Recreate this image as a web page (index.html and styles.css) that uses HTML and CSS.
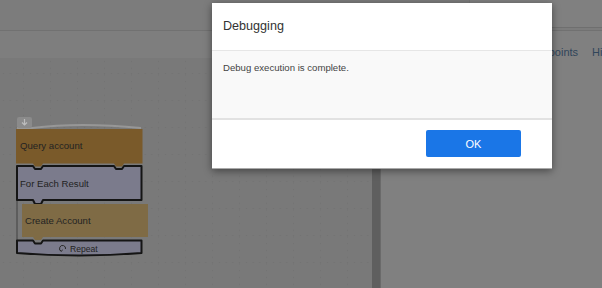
FILE: index.html
```html
<!DOCTYPE html>
<html>
<head>
<meta charset="utf-8">
<link rel="stylesheet" href="styles.css">
</head>
<body>
<div class="app">
  <header class="topbar">
    <div class="topbar-fill"></div>
    <div class="topbar-box"></div>
  </header>
  <div class="main">
    <section class="editor">
      <div class="toolbar"></div>
      <div class="canvas">
        <svg class="blocks" width="372" height="230" viewBox="0 58 372 230" xmlns="http://www.w3.org/2000/svg">
          <!-- hat -->
          <path d="M17 128 L32 128 Q 80 122 141 128" fill="none" stroke="#979797" stroke-width="2"/>
          <rect x="17" y="117" width="15" height="11" rx="2" fill="#8b8b8b"/>
          <path d="M24.5 119 V125 M22 122.5 L24.5 125 L27 122.5" fill="none" stroke="#bdbdbd" stroke-width="1.2"/>
          <!-- query account -->
          <path d="M16 129 H142.5 V163.5 H124 l-2 3 h-6 l-2 -3 H43 l-2 3 h-6 l-2 -3 H16 Z" fill="#7a5a2a"/>
          <text x="20" y="149" class="btext">Query account</text>
          <!-- rail -->
          <path d="M17 200 V241" stroke="#555" stroke-width="1.5"/>
          <!-- for each -->
          <path d="M17 166 H33 l2 3 h6 l2 -3 H114 l2 3 h6 l2 -3 H141.5 V200 H43 l-2 4 h-6 l-2 -4 H17 Z" fill="#7b7b8c" stroke="#151515" stroke-width="2" stroke-linejoin="round"/>
          <text x="20" y="187" class="btext">For Each Result</text>
          <!-- create account -->
          <path d="M22 204 H148 V237 H43 l-2 3 h-6 l-2 -3 H22 Z" fill="#7f6b45"/>
          <text x="25" y="224" class="btext">Create Account</text>
          <!-- repeat -->
          <path d="M17 240.5 H33 l2 3 h6 l2 -3 H141.5 V253 Q 79 258 17 253 Z" fill="#7b7b8c" stroke="#151515" stroke-width="2" stroke-linejoin="round"/>
          <path d="M61 251 A3 3 0 1 1 65.5 249" fill="none" stroke="#2a2a2a" stroke-width="1"/>
          <path d="M59.5 249.5 L61 251.5 L62.8 249.8" fill="none" stroke="#2a2a2a" stroke-width="1"/>
          <text x="70" y="251.5" class="rtext">Repeat</text>
        </svg>
      </div>
    </section>
    <div class="splitter"></div>
    <section class="panel">
      <nav class="tabs">
        <span class="tab">Breakpoints</span>
        <span class="tab">History</span>
      </nav>
    </section>
  </div>
</div>

<div class="dialog" role="dialog">
  <div class="dialog-head">Debugging</div>
  <div class="dialog-body">Debug execution is complete.</div>
  <div class="dialog-foot">
    <button class="ok">OK</button>
  </div>
</div>
</body>
</html>
```

FILE: styles.css
```css
html, body {
  margin: 0;
  padding: 0;
}
body {
  width: 602px;
  height: 288px;
  overflow: hidden;
  background: #808080;
  font-family: "Liberation Sans", Arial, sans-serif;
  position: relative;
}
.app {
  display: flex;
  flex-direction: column;
  height: 288px;
}
.topbar {
  height: 30px;
  flex: none;
  display: flex;
  background: #7c7c7c;
  border-bottom: 1px solid #717171;
}
.topbar-fill {
  flex: 1;
}
.topbar-box {
  width: 132px;
  height: 27px;
  background: #808080;
  border-left: 1px solid #767676;
  border-bottom: 1px solid #6f6f6f;
}
.main {
  flex: 1;
  display: flex;
  min-height: 0;
}
.editor {
  flex: none;
  width: 372px;
  display: flex;
  flex-direction: column;
}
.toolbar {
  height: 27px;
  background: #7e7e7e;
}
.canvas {
  flex: 1;
  position: relative;
  background-color: #797979;
  background-image:
    radial-gradient(circle, #727272 0.6px, transparent 1px),
    radial-gradient(circle, #727272 0.6px, transparent 1px);
  background-size: 6.75px 27px, 27px 6.75px;
  background-position: 0 2px, 10px 0;
  overflow: hidden;
}
.blocks {
  position: absolute;
  left: 0;
  top: 0;
  display: block;
}
.btext {
  font-family: "Liberation Sans", Arial, sans-serif;
  font-size: 9.6px;
  fill: #232323;
}
.rtext {
  font-family: "Liberation Sans", Arial, sans-serif;
  font-size: 8.6px;
  fill: #232323;
}
.splitter {
  flex: none;
  width: 8px;
  background: #5f5f5f;
  border-right: 1px solid #6a6a6a;
}
.panel {
  flex: 1;
  min-width: 0;
  overflow: hidden;
  background: #808080;
}
.tabs {
  display: flex;
  gap: 14px;
  padding: 15px 0 0 139px;
  white-space: nowrap;
  font-size: 11px;
  color: #30455a;
}
.dialog {
  position: absolute;
  left: 212px;
  top: 3px;
  width: 340px;
  height: 166px;
  background: #fff;
  display: flex;
  flex-direction: column;
  box-shadow: 0 2px 8px rgba(0, 0, 0, 0.45);
  border-bottom: 1px solid #a9a9a9;
  box-sizing: border-box;
}
.dialog-head {
  height: 48px;
  box-sizing: border-box;
  padding: 16px 0 0 11px;
  font-size: 12.6px;
  color: #333;
  border-bottom: 1px solid #e6e6e6;
}
.dialog-body {
  height: 69px;
  box-sizing: border-box;
  background: #f9f9f9;
  padding: 11px 0 0 11px;
  font-size: 9.6px;
  color: #444;
  border-bottom: 2px solid #e2e2e2;
}
.dialog-foot {
  flex: 1;
  display: flex;
  justify-content: flex-end;
  align-items: flex-start;
  padding: 10px 31px 0 0;
}
.ok {
  width: 95px;
  height: 27px;
  border: none;
  border-radius: 2px;
  background: #1a76e7;
  color: #fff;
  font-family: "Liberation Sans", Arial, sans-serif;
  font-size: 11px;
  padding: 0;
}
```
